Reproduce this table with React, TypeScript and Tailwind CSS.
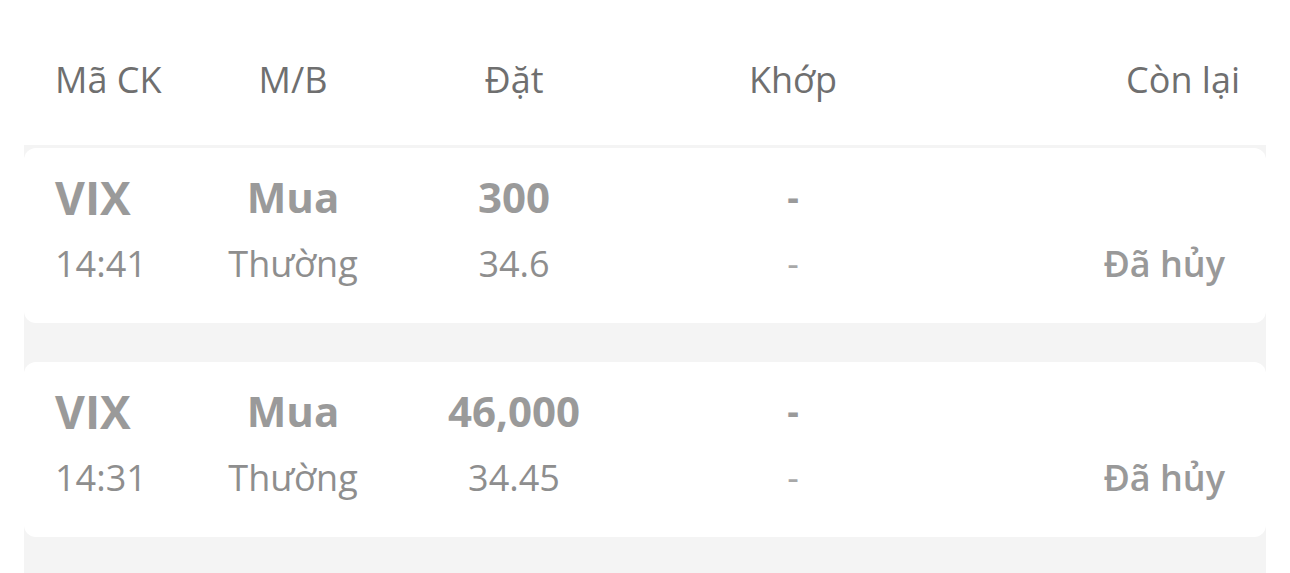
// Order history list - Lịch sử lệnh

const orders = [
  { code: 'VIX', time: '14:41', side: 'Mua', type: 'Thường', qty: '300', price: '34.6', status: 'Đã hủy' },
  { code: 'VIX', time: '14:31', side: 'Mua', type: 'Thường', qty: '46,000', price: '34.45', status: 'Đã hủy' },
];

const cols = 'grid grid-cols-[138px_200px_242px_316px_1fr]';

export default function App() {
  return (
    <div className="min-h-[573px] bg-white font-['Open_Sans',sans-serif]">
      {/* Table Header */}
      <div className={`${cols} h-[145px] pl-[55px] pr-[50px] pt-[55px] text-[36px] leading-[49px] text-[#6f6f6f]`}>
        <div>Mã CK</div>
        <div className="text-center">M/B</div>
        <div className="text-center">Đặt</div>
        <div className="text-center">Khớp</div>
        <div className="text-right">Còn lại</div>
      </div>

      {/* Orders */}
      <div className="mx-[24px] bg-[#f4f4f4] pt-[3px] pb-[40px]">
        {orders.map((o, i) => (
          <div
            key={i}
            className={`rounded-[12px] bg-white pl-[31px] pr-[41px] pt-[21px] pb-[34px] ${i > 0 ? 'mt-[39px]' : ''}`}
          >
            <div className={`${cols} h-[56px] items-center font-bold text-[#9a9a9a]`}>
              <div className="text-[46px] leading-[56px]">{o.code}</div>
              <div className="text-center text-[42px] leading-[56px]">{o.side}</div>
              <div className="text-center text-[42px] leading-[56px]">{o.qty}</div>
              <div className="text-center text-[36px] leading-[56px]">-</div>
              <div />
            </div>
            <div className={`${cols} mt-[14px] h-[50px] items-center text-[36px] leading-[50px] text-[#8e8e8e]`}>
              <div>{o.time}</div>
              <div className="text-center">{o.type}</div>
              <div className="text-center">{o.price}</div>
              <div className="text-center text-[#a8a8a8]">-</div>
              <div className="text-right font-semibold text-[#999999]">{o.status}</div>
            </div>
          </div>
        ))}
      </div>
    </div>
  );
}
